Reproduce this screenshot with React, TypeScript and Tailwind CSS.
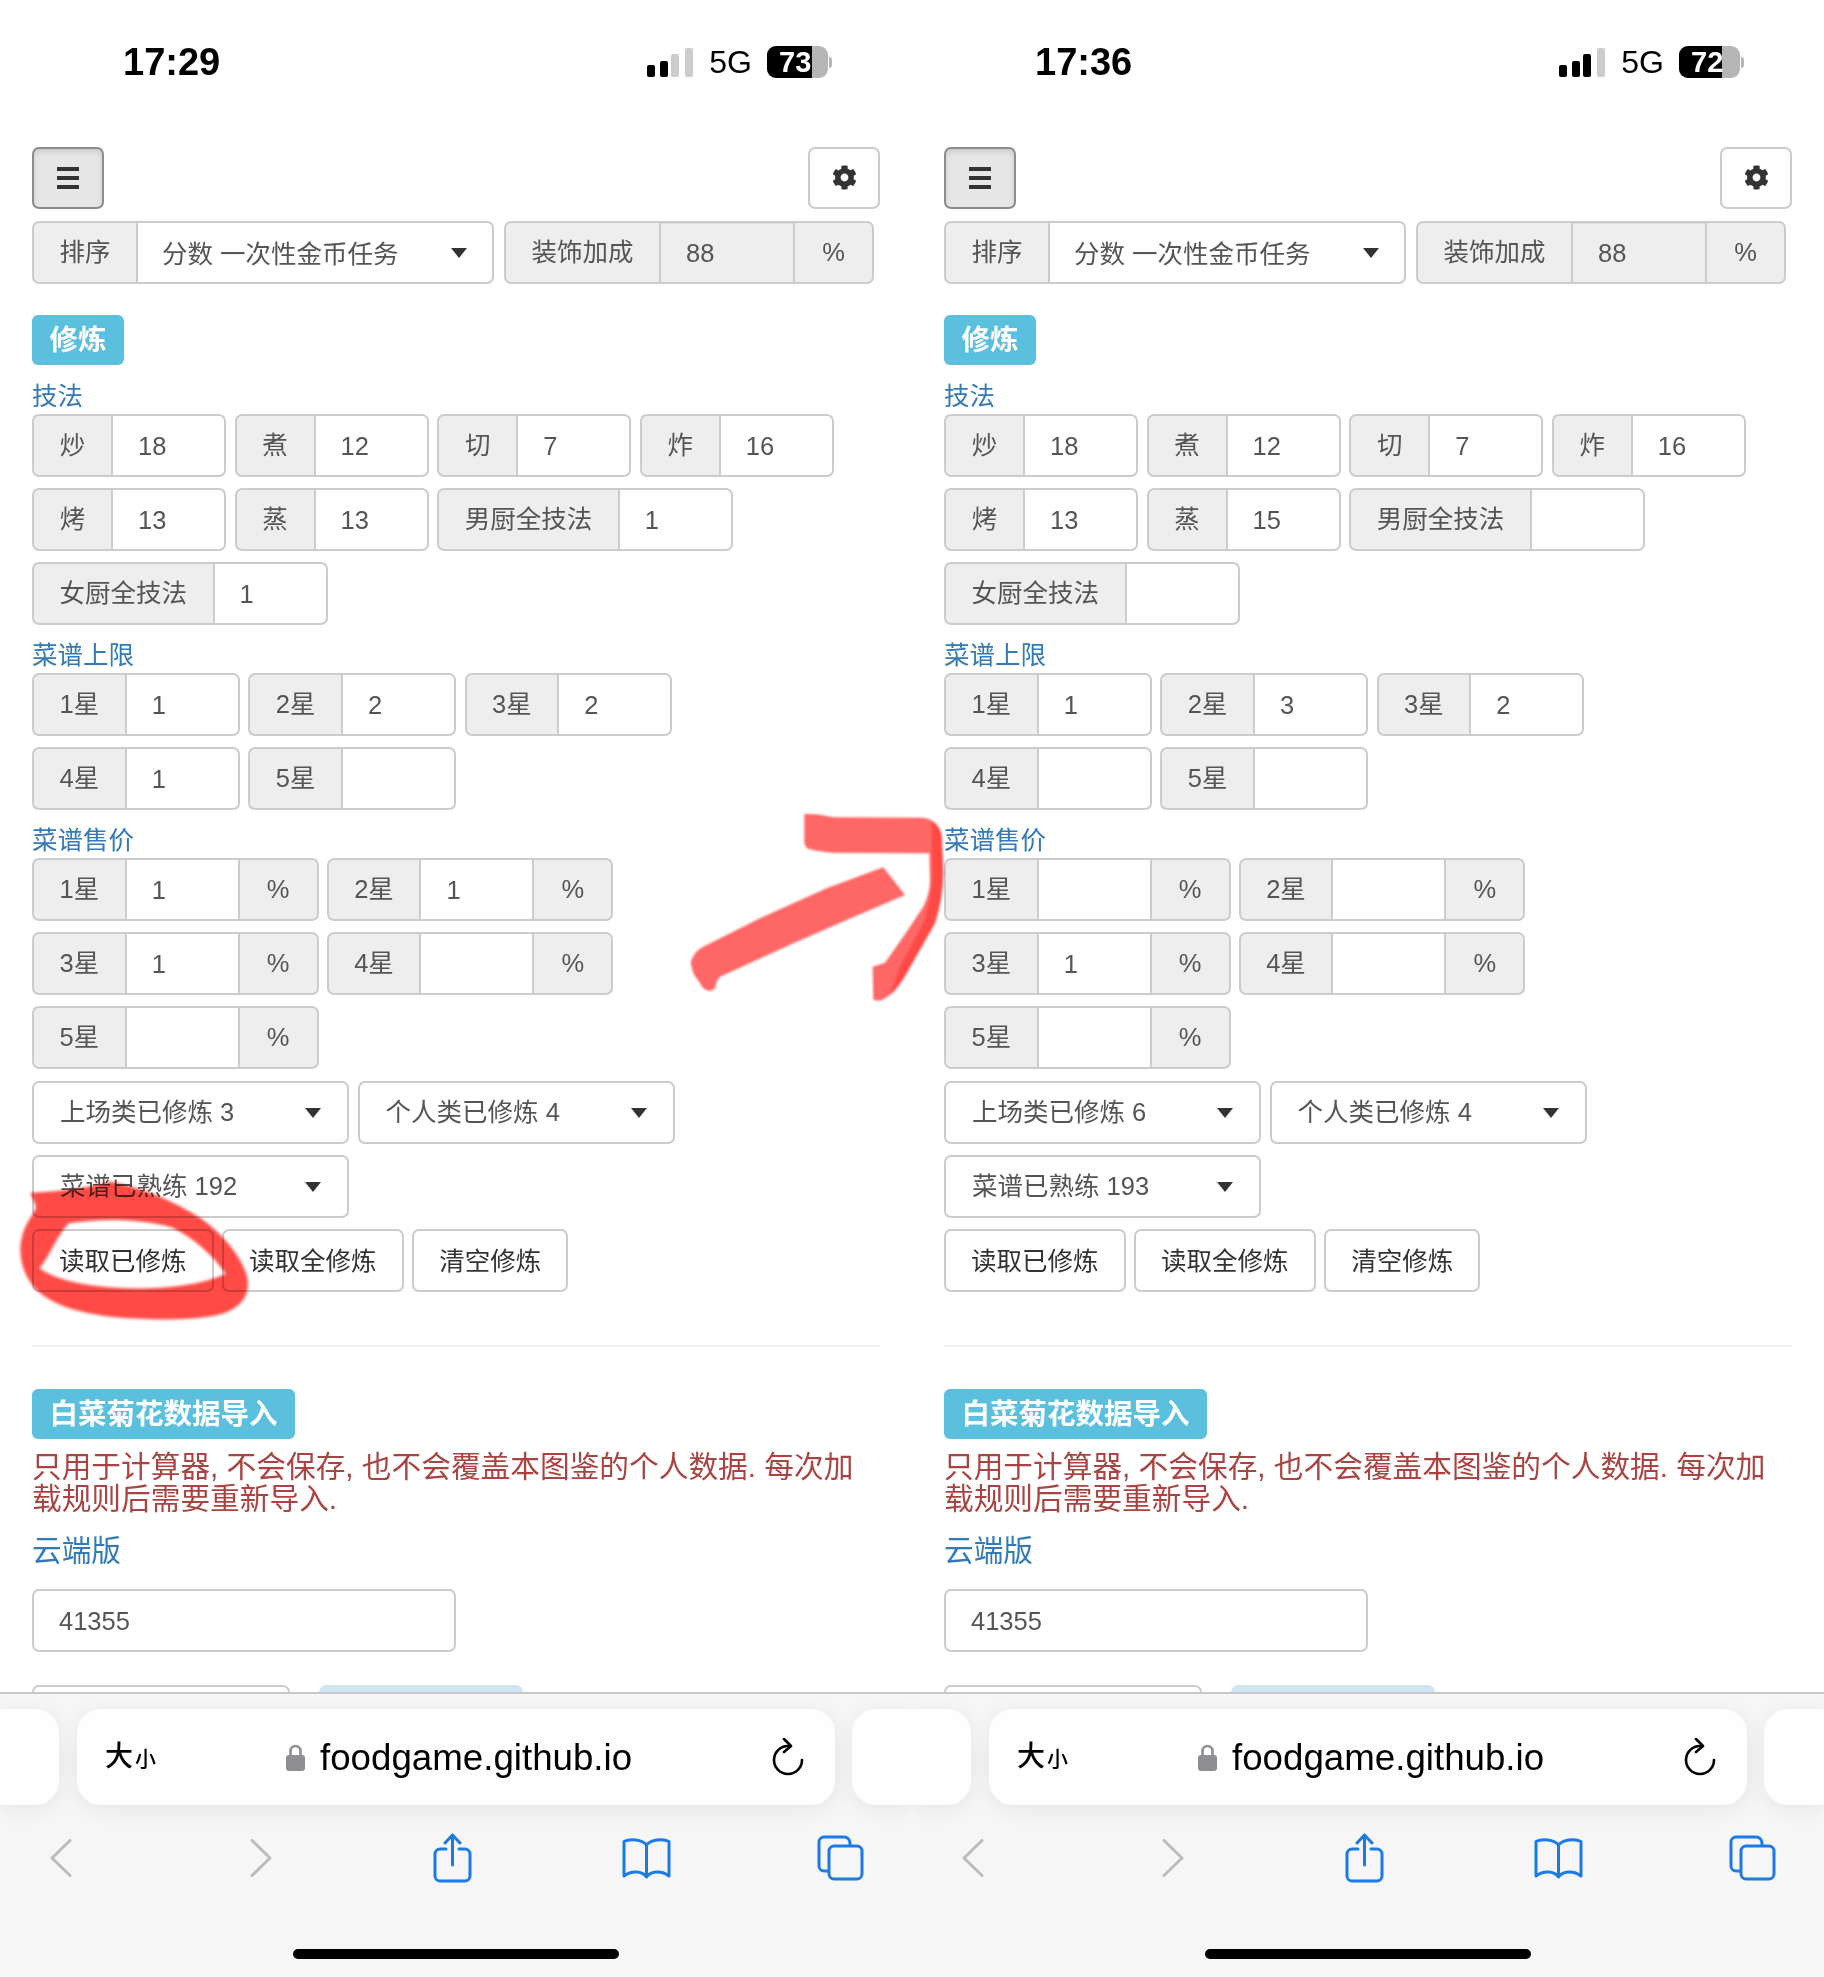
import { FaCog } from "react-icons/fa";

interface Field {
  label: string;
  value: string;
}

interface PhoneData {
  time: string;
  signalBars: number;
  battery: string;
  batteryFill: number;
  skills: Field[];
  recipeLimit: Field[];
  recipePrice: Field[];
  selects: string[];
}

const FONT = "font-['Liberation_Sans','Noto_Sans_CJK_SC',sans-serif]";
const BLUE = "#1c7ae6";

const left: PhoneData = {
  time: "17:29",
  signalBars: 2,
  battery: "73",
  batteryFill: 45,
  skills: [
    { label: "炒", value: "18" },
    { label: "煮", value: "12" },
    { label: "切", value: "7" },
    { label: "炸", value: "16" },
    { label: "烤", value: "13" },
    { label: "蒸", value: "13" },
    { label: "男厨全技法", value: "1" },
    { label: "女厨全技法", value: "1" },
  ],
  recipeLimit: [
    { label: "1星", value: "1" },
    { label: "2星", value: "2" },
    { label: "3星", value: "2" },
    { label: "4星", value: "1" },
    { label: "5星", value: "" },
  ],
  recipePrice: [
    { label: "1星", value: "1" },
    { label: "2星", value: "1" },
    { label: "3星", value: "1" },
    { label: "4星", value: "" },
    { label: "5星", value: "" },
  ],
  selects: ["上场类已修炼 3", "个人类已修炼 4", "菜谱已熟练 192"],
};

const right: PhoneData = {
  time: "17:36",
  signalBars: 3,
  battery: "72",
  batteryFill: 43,
  skills: [
    { label: "炒", value: "18" },
    { label: "煮", value: "12" },
    { label: "切", value: "7" },
    { label: "炸", value: "16" },
    { label: "烤", value: "13" },
    { label: "蒸", value: "15" },
    { label: "男厨全技法", value: "" },
    { label: "女厨全技法", value: "" },
  ],
  recipeLimit: [
    { label: "1星", value: "1" },
    { label: "2星", value: "3" },
    { label: "3星", value: "2" },
    { label: "4星", value: "" },
    { label: "5星", value: "" },
  ],
  recipePrice: [
    { label: "1星", value: "" },
    { label: "2星", value: "" },
    { label: "3星", value: "1" },
    { label: "4星", value: "" },
    { label: "5星", value: "" },
  ],
  selects: ["上场类已修炼 6", "个人类已修炼 4", "菜谱已熟练 193"],
};

function SignalIcon({ bars }: { bars: number }) {
  const rects = [
    { x: 0, y: 17, h: 12 },
    { x: 13, y: 13, h: 16 },
    { x: 24, y: 6, h: 23 },
    { x: 38, y: 0, h: 29 },
  ];
  return (
    <svg width="46" height="29" viewBox="0 0 46 29">
      {rects.map((r, i) => (
        <rect key={r.x} x={r.x} y={r.y} width="8" height={r.h} rx="2" fill={i < bars ? "#000" : "#ccc"} />
      ))}
    </svg>
  );
}

function Battery({ level, fill }: { level: string; fill: number }) {
  return (
    <div className="flex items-center">
      <div className="relative h-[32px] w-[61px] overflow-hidden rounded-[9px] bg-[#b5b5b5]">
        <div className="h-full bg-black" style={{ width: fill }} />
        <span className="absolute inset-0 pl-[12px] text-[29px] leading-[32px] font-bold text-white">{level}</span>
      </div>
      <div className="ml-[1px] h-[11px] w-[3px] rounded-r-full bg-[#b5b5b5]" />
    </div>
  );
}

function StatusBar({ data }: { data: PhoneData }) {
  return (
    <div className="flex h-[147px] items-start pt-[45px] pl-[123px]">
      <span className="text-[38px] leading-[34px] font-bold text-black">{data.time}</span>
      <div className="ml-auto flex h-[34px] items-center pr-[80px]">
        <SignalIcon bars={data.signalBars} />
        <span className="mr-[15px] ml-[16px] text-[32px] leading-[34px] text-black">5G</span>
        <Battery level={data.battery} fill={data.batteryFill} />
      </div>
    </div>
  );
}

function Addon({ children, className = "" }: { children: React.ReactNode; className?: string }) {
  return (
    <span className={`flex min-w-[79px] shrink-0 items-center justify-center border-2 border-[#ccc] bg-[#eee] px-[25.5px] text-[25.5px] whitespace-nowrap text-[#555] ${className}`}>
      {children}
    </span>
  );
}

function InputGroup({ field, suffix }: { field: Field; suffix?: boolean }) {
  return (
    <div className="flex h-[63px]">
      <Addon className="rounded-l-[7px] border-r-0">{field.label}</Addon>
      <input
        readOnly
        value={field.value}
        className={`h-full w-[115px] border-2 border-[#ccc] bg-white px-[25px] pt-[1px] text-[25.5px] text-[#555] outline-none ${suffix ? "" : "rounded-r-[7px]"}`}
      />
      {suffix && <Addon className="w-[79px] rounded-r-[7px] border-l-0 !px-0">%</Addon>}
    </div>
  );
}

function Caret() {
  return <span className="h-0 w-0 border-x-[8px] border-t-[10px] border-x-transparent border-t-[#333]" />;
}

function SelectBox({ text }: { text: string }) {
  return (
    <div className="flex h-[63px] w-[317px] items-center justify-between rounded-[7px] border-2 border-[#ccc] bg-white pr-[26px] pl-[26px] text-[25.5px] text-[#555]">
      <span>{text}</span>
      <Caret />
    </div>
  );
}

function Btn({ children }: { children: React.ReactNode }) {
  return (
    <button className="h-[63px] rounded-[7px] border-2 border-[#ccc] bg-white px-[25px] pt-[2px] text-[25.5px] text-[#333]">
      {children}
    </button>
  );
}

function Label({ children }: { children: React.ReactNode }) {
  return (
    <span className="flex h-[50px] w-fit items-center rounded-[6px] bg-[#5bc0de] px-[17.5px] pt-[1px] text-[28.5px] font-bold text-white">
      {children}
    </span>
  );
}

function SubTitle({ children, className = "" }: { children: React.ReactNode; className?: string }) {
  return <div className={`h-[30px] text-[25.5px] leading-[25px] text-[#337ab7] ${className}`}>{children}</div>;
}

function Toolbar() {
  return (
    <div className="flex justify-between">
      <button className="flex h-[62px] w-[72px] flex-col items-center justify-center gap-[5px] rounded-[7px] border-2 border-[#8c8c8c] bg-[#e6e6e6] shadow-[inset_0_3px_5px_rgba(0,0,0,0.12)]">
        <span className="h-[4px] w-[22px] bg-[#333]" />
        <span className="h-[4px] w-[22px] bg-[#333]" />
        <span className="h-[4px] w-[22px] bg-[#333]" />
      </button>
      <button className="flex h-[62px] w-[72px] items-center justify-center rounded-[7px] border-2 border-[#ccc] bg-white pb-[2px] text-[#333]">
        <FaCog size={25} />
      </button>
    </div>
  );
}

function SortRow() {
  return (
    <div className="mt-[12px] flex gap-[10px]">
      <div className="flex h-[63px] w-[462px]">
        <Addon className="rounded-l-[7px] border-r-0">排序</Addon>
        <div className="flex flex-1 items-center justify-between rounded-r-[7px] border-2 border-[#ccc] bg-white pr-[25px] pl-[24px] text-[25.5px] text-[#555]">
          <span className="pt-[3px]">分数 一次性金币任务</span>
          <Caret />
        </div>
      </div>
      <div className="flex h-[63px] w-[370px]">
        <Addon className="rounded-l-[7px] border-r-0">装饰加成</Addon>
        <input
          readOnly
          value="88"
          className="h-full w-[136px] border-2 border-[#ccc] bg-[#eee] px-[25px] pt-[1px] text-[25.5px] text-[#555] shadow-[inset_0_1px_1px_rgba(0,0,0,0.075)] outline-none"
        />
        <Addon className="w-[79px] rounded-r-[7px] border-l-0 !px-0">%</Addon>
      </div>
    </div>
  );
}

function PageContent({ data }: { data: PhoneData }) {
  return (
    <div className="min-h-0 flex-1 overflow-hidden px-[32px]">
      <Toolbar />
      <SortRow />

      <div className="mt-[31px]">
        <Label>修炼</Label>
      </div>

      <SubTitle className="mt-[19px]">技法</SubTitle>
      <div className="flex flex-wrap gap-x-[8.6px] gap-y-[11px]">
        {data.skills.map((f) => (
          <InputGroup key={f.label} field={f} />
        ))}
      </div>

      <SubTitle className="mt-[18px]">菜谱上限</SubTitle>
      <div className="flex flex-wrap gap-x-[8.6px] gap-y-[11px]">
        {data.recipeLimit.map((f) => (
          <InputGroup key={f.label} field={f} />
        ))}
      </div>

      <SubTitle className="mt-[18px]">菜谱售价</SubTitle>
      <div className="flex flex-wrap gap-x-[8px] gap-y-[11px]">
        {data.recipePrice.map((f) => (
          <InputGroup key={f.label} field={f} suffix />
        ))}
      </div>

      <div className="mt-[12px] flex flex-wrap gap-x-[8.6px] gap-y-[11px]">
        {data.selects.map((s) => (
          <SelectBox key={s} text={s} />
        ))}
      </div>

      <div className="mt-[11px] flex gap-x-[8.6px]">
        <Btn>读取已修炼</Btn>
        <Btn>读取全修炼</Btn>
        <Btn>清空修炼</Btn>
      </div>

      <hr className="mt-[53px] border-t-2 border-[#eee]" />

      <div className="mt-[42px]">
        <Label>白菜菊花数据导入</Label>
      </div>
      <p className="mt-[12px] text-[29.7px] leading-[32px] text-[#a94442]">
        只用于计算器, 不会保存, 也不会覆盖本图鉴的个人数据. 每次加
        <br />
        载规则后需要重新导入.
      </p>
      <div className="mt-[20px] text-[29.7px] leading-[32px] text-[#337ab7]">云端版</div>
      <input
        readOnly
        value="41355"
        className="mt-[22px] h-[63px] w-[424px] rounded-[7px] border-2 border-[#ccc] bg-white px-[25px] pt-[1px] text-[25.5px] text-[#555] outline-none"
      />
      <div className="mt-[33px] flex">
        <div className="h-[63px] w-[258px] rounded-[7px] border-2 border-[#ccc] bg-white" />
        <div className="ml-[29px] h-[63px] w-[204px] rounded-[7px] bg-[#cfe5f2]" />
      </div>
    </div>
  );
}

function UrlPill() {
  return (
    <div className="flex h-[96px] w-[758px] items-center rounded-[24px] bg-[#fefefe] pr-[31px] pl-[28px] shadow-[0_4px_22px_rgba(0,0,0,0.07)]">
      <span className="flex items-end font-medium text-black">
        <span className="text-[28px] leading-[32px]">大</span>
        <span className="ml-[2px] text-[21px] leading-[28px]">小</span>
      </span>
      <svg className="ml-[130px]" width="19" height="28" viewBox="0 0 19 28">
        <path d="M4.500 13V8a5 5 0 0 1 10 0v5" fill="none" stroke="#8e8e93" strokeWidth="2.600" />
        <rect x="0" y="12" width="19" height="16" rx="3" fill="#8e8e93" />
      </svg>
      <span className="ml-[15px] pt-[1px] text-[36.7px] leading-[44px] text-black">foodgame.github.io</span>
      <svg className="ml-auto" width="32" height="38" viewBox="0 0 32 38" fill="none" stroke="#000" strokeWidth="2.600" strokeLinecap="round" strokeLinejoin="round">
        <path d="M16 8A14 14 0 1 0 30 22" />
        <path d="M12 1l7 7-7 6" />
      </svg>
    </div>
  );
}

function Chevron({ flip }: { flip?: boolean }) {
  return (
    <svg width="22" height="38" viewBox="0 0 22 38" fill="none" stroke="#bcbcbc" strokeWidth="3" strokeLinecap="round" strokeLinejoin="round">
      <path d={flip ? "M2 1.500 20 19 2 36.500" : "M20 1.500 2 19 20 36.500"} />
    </svg>
  );
}

function BrowserBar() {
  return (
    <div className="h-[285px] shrink-0 border-t-2 border-[#c8c8c8] bg-[#f6f6f7] pt-[15px]">
      <div className="flex">
        <div className="h-[96px] w-[59px] rounded-r-[24px] bg-[#fefefe] shadow-[0_4px_22px_rgba(0,0,0,0.07)]" />
        <div className="ml-[18px]">
          <UrlPill />
        </div>
        <div className="ml-[17px] h-[96px] flex-1 rounded-l-[24px] bg-[#fefefe] shadow-[0_4px_22px_rgba(0,0,0,0.07)]" />
      </div>

      <div className="flex h-[106px] items-center">
        <div className="ml-[50px]">
          <Chevron />
        </div>
        <div className="ml-[178px]">
          <Chevron flip />
        </div>
        <svg className="ml-[161px]" width="39" height="50" viewBox="0 0 39 50" fill="none" stroke={BLUE} strokeWidth="3" strokeLinecap="round" strokeLinejoin="round">
          <path d="M13 16H7a5 5 0 0 0-5 5v22a5 5 0 0 0 5 5h25a5 5 0 0 0 5-5V21a5 5 0 0 0-5-5h-6" />
          <path d="M19.500 32V2M12 10l7.500-8 7.500 8" />
        </svg>
        <svg className="ml-[150px]" width="49" height="41" viewBox="0 0 49 41" fill="none" stroke={BLUE} strokeWidth="3" strokeLinecap="round" strokeLinejoin="round">
          <path d="M24.500 7C20 1.500 8 .5 2 3.500V38C9 32.500 20 32.500 24.500 39 29 32.500 40 32.500 47 38V3.500C41 .5 29 1.500 24.500 7V39" />
        </svg>
        <svg className="ml-[146px]" width="47" height="46" viewBox="0 0 47 46" fill="none" stroke={BLUE} strokeWidth="3" strokeLinejoin="round">
          <path d="M12 36H7a5 5 0 0 1-5-5V7a5 5 0 0 1 5-5h20a6 6 0 0 1 6 6v3" />
          <rect x="12" y="11" width="33" height="33" rx="5" />
        </svg>
      </div>

      <div className="mx-auto mt-[38px] h-[10px] w-[326px] rounded-full bg-black" />
    </div>
  );
}

function Phone({ data }: { data: PhoneData }) {
  return (
    <div className="flex h-full w-[912px] flex-col overflow-hidden">
      <StatusBar data={data} />
      <PageContent data={data} />
      <BrowserBar />
    </div>
  );
}

export default function App() {
  return (
    <div className={`relative flex h-[1977px] w-[1824px] overflow-hidden bg-white ${FONT}`}>
      <Phone data={left} />
      <Phone data={right} />

      {/* hand drawn circle around the button */}
      <svg
        className="pointer-events-none absolute top-[1050px] left-0 mix-blend-multiply blur-[1.5px]"
        width="912"
        height="500"
        viewBox="0 0 1568 1500"
        preserveAspectRatio="none"
      >
        <path
          fillRule="evenodd"
          fill="#ff4a45"
          d="M52 428C100 424 150 415 190 395C250 415 300 455 345 505C385 555 415 620 425 680C430 730 420 765 385 790C345 812 270 812 200 802C130 790 85 760 60 715C38 670 30 610 38 560C42 520 60 490 62 470ZM118 520C95 565 85 620 68 655C95 690 150 712 220 715C280 717 340 708 388 672C368 620 335 565 295 532C240 505 170 505 118 520Z"
        />
      </svg>

      {/* hand drawn arrow between the two phones */}
      <svg
        className="pointer-events-none absolute top-[780px] left-[660px] mix-blend-multiply blur-[1px]"
        width="300"
        height="240"
        viewBox="0 0 900 720"
      >
        <path
          fill="#ff6666"
          d="M92 548Q100 515 130 500L300 415L500 325L670 262L735 345L560 420L400 490L180 590Q170 600 165 625Q150 640 130 625L100 580Z"
        />
        <path
          fill="#ff6666"
          d="M433 102Q470 100 520 112L790 113Q830 118 845 165L850 280Q848 360 825 430L740 580Q700 650 660 662L640 660L638 560L675 548L730 470L790 380Q810 340 810 300L808 220L520 218Q470 215 440 205L433 190Z"
        />
        <path className="blur-[2px]" fill="#ff3d36" opacity="0.7" d="M815 122Q840 135 845 165L850 280Q848 360 825 430L740 580Q715 625 690 645L720 560L790 430Q815 360 818 280Z" />
      </svg>
    </div>
  );
}
